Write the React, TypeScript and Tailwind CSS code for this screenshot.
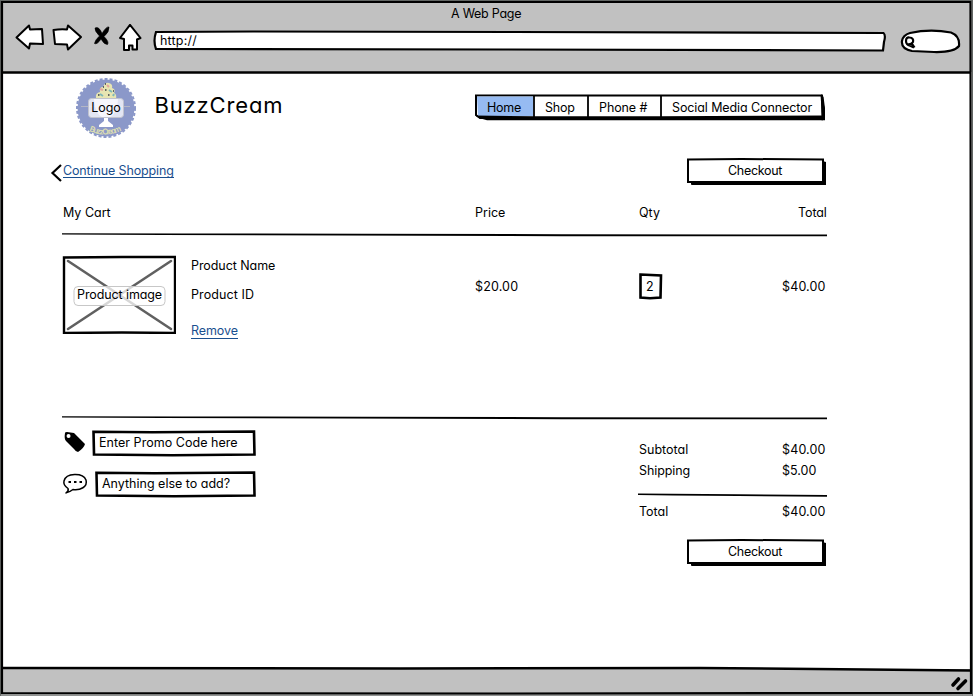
import type { ReactNode } from "react";

const INK = "#000";

function Label({ children, className = "" }: { children: ReactNode; className?: string }) {
  return (
    <span className={`relative block whitespace-nowrap text-[12.5px] leading-[18px] ${className}`}>
      {children}
    </span>
  );
}

function Checkout() {
  return (
    <button className="relative flex h-[27px] w-[139px] pt-[4px]">
      <svg className="absolute inset-0" width="139" height="27" viewBox="0 0 139 27">
        <path d="M4 23H135.500V3L139 4V27H5Z" fill={INK} />
        <path d="M1 1.500L55 1L136 1.500V24H60L1 24Z" fill="#fff" stroke={INK} strokeWidth="2" />
        <path d="M4 25H138M137.200 4V26" stroke={INK} strokeWidth="3.500" />
      </svg>
      <Label className="ml-[41px] text-left tracking-[-0.3px]">Checkout</Label>
    </button>
  );
}

function Divider() {
  return (
    <svg className="block" width="765" height="4" viewBox="0 0 765 4">
      <path d="M0 0.200L120 0.500L300 0.700L500 1.200L765 1.500V3.200H500L280 2.400L100 2L0 1.500Z" fill={INK} />
    </svg>
  );
}

function Logo() {
  return (
    <div className="relative flex h-[60px] w-[60px] justify-center pt-[21px]">
      <svg className="absolute inset-0" width="60" height="60" viewBox="0 0 60 60">
        <circle cx="30" cy="30" r="28.500" fill="#8b98c9" />
        <circle cx="30" cy="30" r="29" fill="none" stroke="#8b98c9" strokeWidth="2" strokeDasharray="3 2" />
        <path d="M5 28.500H54" stroke="#b3b6c5" />
        <path d="M20 20q-1-5 4-6q-1-5 3-5q2-5 6-4q4 1 3 5q4 1 2 5q3 1 2 6Z" fill="#e7e5b2" />
        <path d="M24 11l3 1M31 7l2 2" stroke="#e2a49d" strokeWidth="2" />
        <path d="M24 16l3 2M33 12l3 2M37 18l1-2" stroke="#7eb8b9" strokeWidth="2" />
        <path d="M29 6h1M22 17h1.500M29 12h1.500M32 17h1.500M37 13h1M27 9h1" stroke="#383c48" strokeWidth="1.300" />
        <path d="M18 21H42Q41 37 32 40V43L37 47V49H23V47L28 43V40Q19 37 18 21Z" fill="#fff" />
        <defs><path id="logo-arc" d="M13 53Q30 61 49 51" /></defs>
        <text fontSize="8" fontWeight="600" fill="#dedfb1" textLength="34"><textPath href="#logo-arc">BuzzCream</textPath></text>
        <rect x="12.500" y="20.500" width="35" height="19" rx="3" fill="#f4f4fb" fillOpacity="0.830" stroke="#c1c3ce" />
      </svg>
      <Label>Logo</Label>
    </div>
  );
}

function NavBar() {
  return (
    <nav className="relative flex h-[27px] w-[350px] pt-[5px]">
      <svg className="absolute inset-0" width="350" height="27" viewBox="0 0 350 27">
        <path d="M1 1.500H347L348.500 16V24H5L1 21Z" fill="#fff" stroke={INK} strokeWidth="2" />
        <path d="M2 2.500H58V22H3Z" fill="#96bbf2" />
        <path d="M0 21.500L60 22.300H185L348 21.500V26.300H12L4 24Z" fill={INK} />
        <path d="M346.500 2L348 24M59 1V25M113 1V25M186 1V25" fill="none" stroke={INK} strokeWidth="1.800" />
        <path d="M346 0L348.500 3L350 14V26.300H346.500Z" fill={INK} />
      </svg>
      <Label className="ml-3 w-[58px] tracking-[-0.25px]">Home</Label>
      <Label className="w-[54px] tracking-[-0.25px]">Shop</Label>
      <Label className="w-[73px] tracking-[-0.1px]">Phone #</Label>
      <Label className="tracking-[-0.1px]">Social Media Connector</Label>
    </nav>
  );
}

function BrowserHeader() {
  return (
    <header className="h-[72px] bg-[#c1c1c1]">
      <div className="flex h-[29px] pt-[5px] pl-[451px]">
        <Label className="tracking-[-0.25px]">A Web Page</Label>
      </div>
      <div className="flex">
        <svg className="-mt-[5px] ml-[15px] block" width="127" height="28" viewBox="0 0 127 28">
          <g fill="#fff" stroke={INK} strokeWidth="2" strokeLinejoin="round">
            <path d="M1.500 13.500L14 1.500L15 5.500L27 5L28 20L15 19.500L14 24.500Z" />
            <path d="M38.500 6Q45 5 52 5.500L53 1.500L66 13L53 25.500L52 20.500L40 20Z" />
            <path d="M105 14L115 0.800L125.500 14L122 15.500V25.500H117.500V21.500H114V26H109L109 15Z" />
          </g>
          <path d="M80 4Q84 2 87 9.500Q91.500 2 94 3Q94.500 8 89 12.500Q94.500 18 92.500 20.500Q89 20.500 86 15Q82 21 79.500 19.500Q80 16 84.500 12Q79.500 7 80 4Z" fill={INK} stroke={INK} strokeWidth="0.600" strokeLinejoin="round" />
        </svg>
        <div className="relative ml-[11px] flex h-[22px] w-[733px] pt-[3px] pl-[7px]">
          <svg className="absolute inset-0" width="733" height="23" viewBox="0 0 733 23">
            <path d="M3 3L100 2.500L360 3L730.500 4Q733 6 731 13L730 21.500L350 20.500L3 20Q0 12 3 3Z" fill="#fff" stroke={INK} strokeWidth="2.200" />
          </svg>
          <Label className="tracking-[0.2px]">http://</Label>
        </div>
        <svg className="ml-[14px] block" width="62" height="26" viewBox="0 0 62 26">
          <path d="M10 4Q30-.5 51 3.500Q60 7 59 17Q54 23.500 34 23L12 22Q1 20 2 12Q3 6 10 4Z" fill="#fff" stroke={INK} strokeWidth="2.200" />
          <path d="M6 12Q6 8 9.500 8.500Q14 9 13 13Q11 16 7 15Q6 14 6 12M7 15.500Q11 17 14 18.500M11.500 14L14.500 18.500" fill="none" stroke={INK} strokeWidth="2.200" />
        </svg>
      </div>
    </header>
  );
}

function WindowFrame() {
  return (
    <svg className="pointer-events-none absolute inset-0" width="973" height="696" viewBox="0 0 973 696">
      <path d="M0 .5H973M.5 0V696M972.500 0V696M0 695H973" stroke="#626664" strokeWidth="1" />
      <path d="M2 2H970.500L971 693L500 693.500L2 693Z" fill="none" stroke={INK} strokeWidth="2.200" />
      <path d="M2 72.500H971" stroke={INK} strokeWidth="2.500" />
      <path d="M2 668L400 668.500L700 668L971 670.500" fill="none" stroke={INK} strokeWidth="2.500" />
      <path d="M953 685L958.500 679M958 688.500L965.500 681" stroke={INK} strokeWidth="3.600" strokeLinecap="round" />
    </svg>
  );
}

function TextField({ children, className }: { children: ReactNode; className: string }) {
  return (
    <div className={`relative flex h-[27px] pt-[4px] ${className}`}>
      <svg className="absolute inset-0 h-full w-full" viewBox="0 0 163 27" preserveAspectRatio="none">
        <path d="M1.500 1.800L60 2.200L161 1.500L161.500 24.500L80 25.300L2 24.500Z" fill="#fff" stroke={INK} strokeWidth="2.600" />
      </svg>
      {children}
    </div>
  );
}

export default function App() {
  return (
    <div
      className="relative flex h-[696px] w-[973px] flex-col overflow-hidden bg-white font-[Inter,sans-serif] text-black"
      style={{ fontFeatureSettings: '"cv11" 1' }}
    >
      <BrowserHeader />

      <main className="flex-1 pl-[62px]">
        <div className="flex h-[72px]">
          <div className="ml-[14px] pt-[6px]"><Logo /></div>
          <h1 className="ml-[18px] w-[321px] pt-5 pl-[0.5px] text-[22px] leading-[26px] tracking-[0.85px]">BuzzCream</h1>
          <div className="pt-[22px]"><NavBar /></div>
        </div>

        <div className="flex h-[54px]">
          <svg className="-ml-[12px] mt-[19px] block" width="12" height="20" viewBox="0 0 12 20">
            <path d="M11 2L2.500 10L11 18" fill="none" stroke={INK} strokeWidth="2.200" />
          </svg>
          <div className="w-[625px] pt-[20px] pl-px">
            <Label className="w-[111px] border-b border-[#1a4f8f] text-[#1a4f8f] !leading-[13px] tracking-[-0.13px]">Continue Shopping</Label>
          </div>
          <div className="pt-[14px]"><Checkout /></div>
        </div>

        <div className="flex h-[35px] pt-[6px] pl-px">
          <Label className="w-[412px]">My Cart</Label>
          <Label className="w-[164px]">Price</Label>
          <Label className="w-[159px]">Qty</Label>
          <Label className="tracking-[-0.1px]">Total</Label>
        </div>
        <Divider />

        <div className="flex h-[179px] pt-[18px]">
          <div className="relative flex h-[79px] w-[114px] pt-[31px] pl-[15px]">
            <svg className="absolute inset-0" width="114" height="79" viewBox="0 0 114 79">
              <path d="M2 2.500L60 2H113V78L60 77.500L2 78Z" fill="#fff" stroke={INK} strokeWidth="2.400" />
              <path d="M6 6L109 74M109 6L6 74" stroke="#606060" strokeWidth="2.600" strokeLinecap="round" />
              <rect x="12" y="31.500" width="91" height="19" rx="4" fill="#fff" fillOpacity="0.750" stroke="#c7c7c7" />
            </svg>
            <Label className="tracking-[-0.1px]">Product image</Label>
          </div>
          <div className="ml-[15px] w-[284px] pt-[2px]">
            <Label className="tracking-[-0.07px]">Product Name</Label>
            <Label className="mt-[11px] tracking-[0.1px]">Product ID</Label>
            <Label className="mt-[20px] w-[47px] border-b border-[#1a4f8f] text-[#1a4f8f] !leading-[14px] tracking-[-0.1px]">Remove</Label>
          </div>
          <Label className="w-[163px] pt-[23px] tracking-[0.15px]">$20.00</Label>
          <div className="relative mt-[17px] flex h-[28px] w-[25px] pt-[6px] pl-2">
            <svg className="absolute inset-0" width="25" height="28" viewBox="0 0 25 28">
              <path d="M2.500 2.500L23 3.500L22.500 25.500L12 26.300L2.500 25.500Z" fill="#fff" stroke={INK} strokeWidth="2.600" />
            </svg>
            <Label>2</Label>
          </div>
          <Label className="ml-[119px] pt-[23px] tracking-[0.15px]">$40.00</Label>
        </div>
        <Divider />

        <div className="flex">
          <div className="w-[577px] pt-[10px]">
            <div className="flex h-[41px]">
              <svg className="ml-[2px] mt-px block" width="22" height="22" viewBox="0 0 22 22">
                <path fillRule="evenodd" d="M1 2Q1 1 3 1L10 2L21 13Q20 17 14 21Q12 21 10 18L2 10Q0 8 1 2ZM4.500 3A2 2 0 1 0 4.600 7A2 2 0 1 0 4.500 3" fill={INK} />
              </svg>
              <TextField className="ml-[6px] w-[164px] pl-[7px]"><Label className="tracking-[0.04px]">Enter Promo Code here</Label></TextField>
            </div>
            <div className="flex">
              <svg className="mt-[2px] block" width="27" height="23" viewBox="0 0 27 23">
                <path d="M4 20Q7 18 6 15.500Q1 12 2 8C4-.5 21-.5 24 7C26 14 18 17.500 11 16.500Q8 19 3.500 20Z" fill="#fff" stroke={INK} strokeWidth="1.500" />
                <path d="M6.500 9h2.500M12 9h2.500M17.500 9h2.500" stroke={INK} strokeWidth="2.200" />
              </svg>
              <TextField className="ml-[6px] w-[161px] pl-[7px]"><Label>Anything else to add?</Label></TextField>
            </div>
          </div>
          <div className="w-[188px] pt-[21px]">
            <div className="flex h-[21px]"><Label className="w-[143px]">Subtotal</Label><Label className="tracking-[0.15px]">$40.00</Label></div>
            <div className="flex h-[31px]"><Label className="w-[143px] tracking-[-0.1px]">Shipping</Label><Label>$5.00</Label></div>
            <svg className="-ml-px block" width="189" height="5" viewBox="0 0 189 5">
              <path d="M0 0.500L100 1.200L189 2V3.800L100 3L35 2.600L0 2Z" fill={INK} />
            </svg>
            <div className="mt-[5px] flex h-[36px]"><Label className="w-[143px]">Total</Label><Label className="tracking-[0.15px]">$40.00</Label></div>
            <div className="ml-12"><Checkout /></div>
          </div>
        </div>
      </main>

      <footer className="h-[27px] bg-[#c1c1c1]" />
      <WindowFrame />
    </div>
  );
}
